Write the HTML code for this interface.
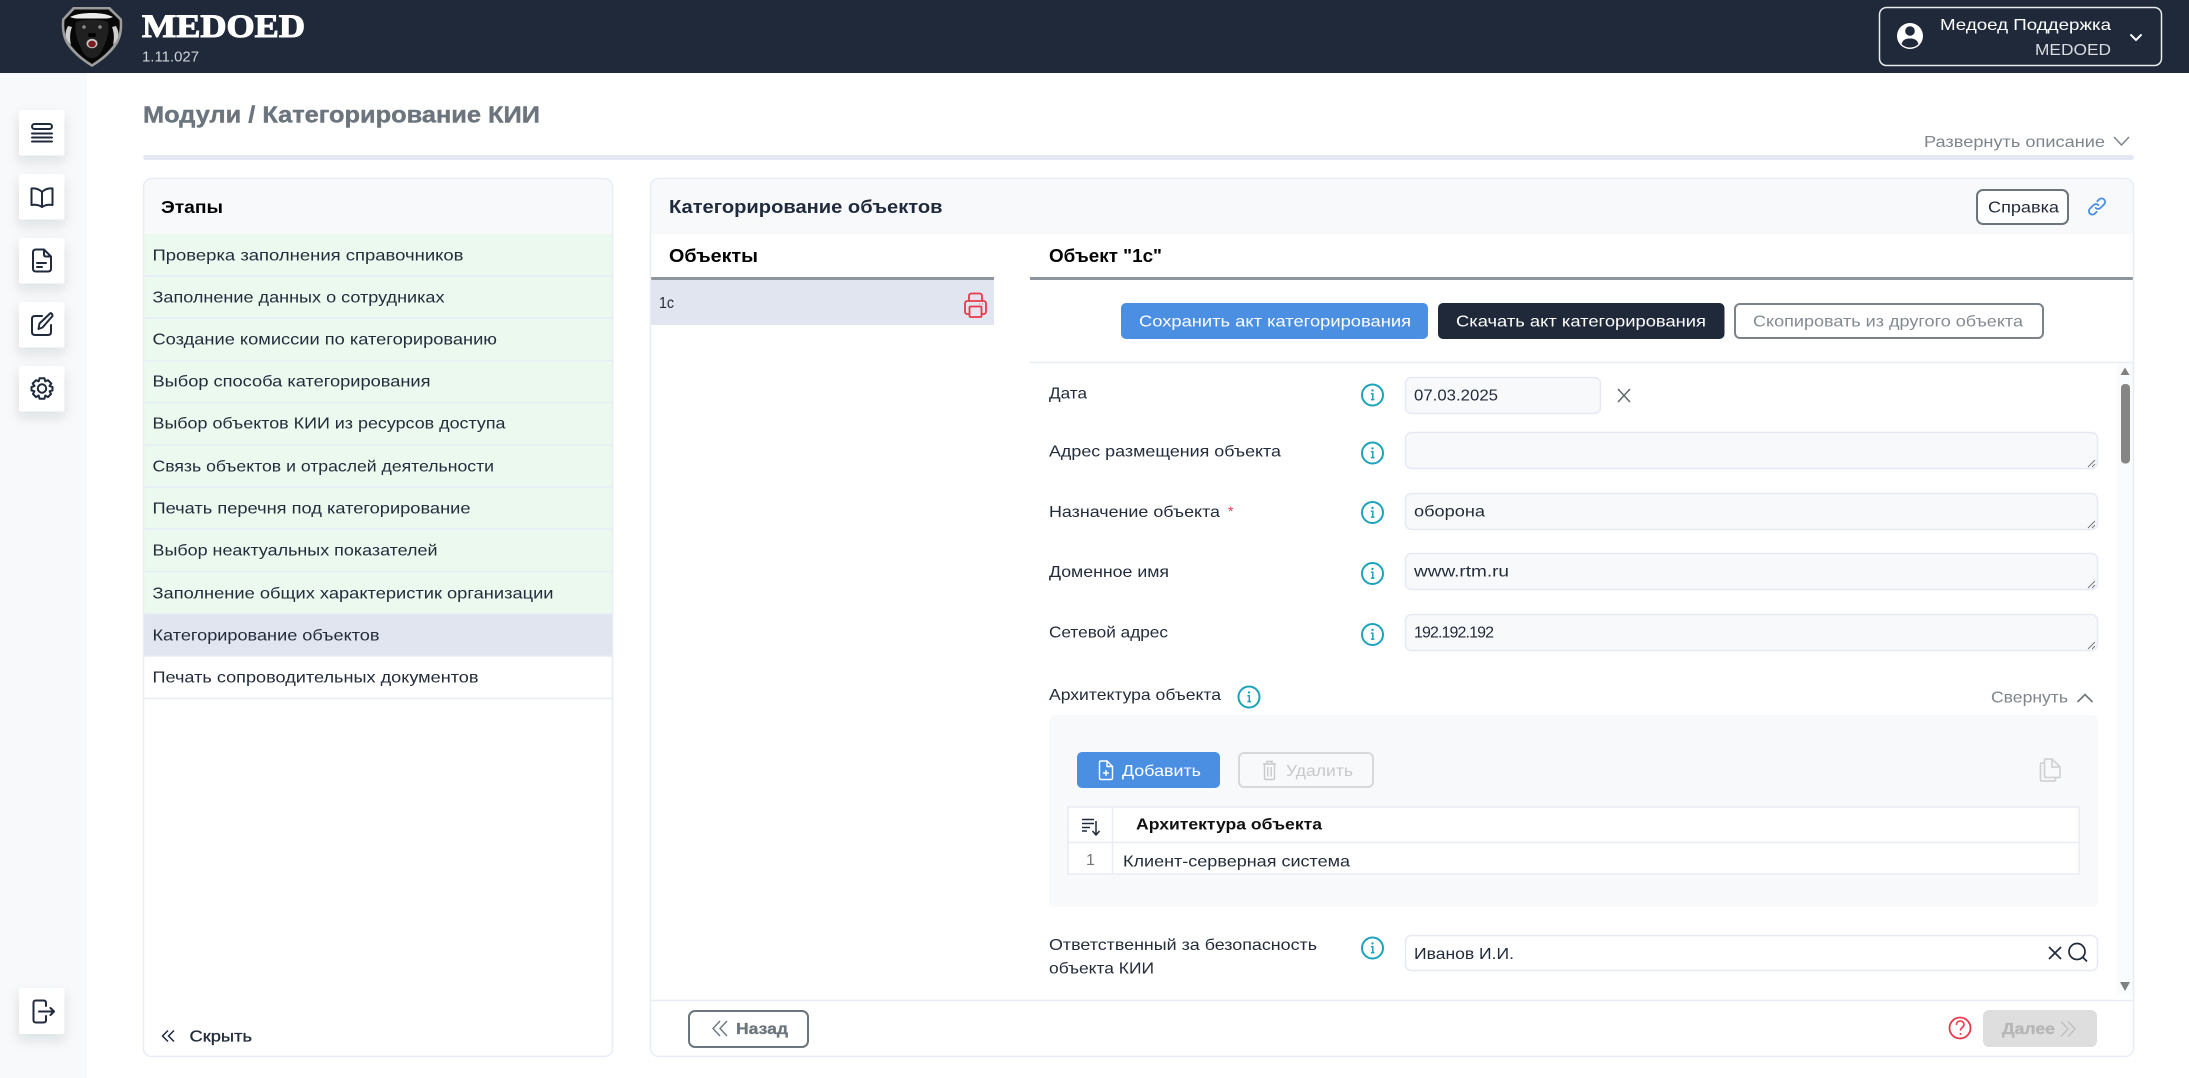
<!DOCTYPE html>
<html lang="ru">
<head>
<meta charset="utf-8">
<title>Модули / Категорирование КИИ</title>
<style>
html,body{margin:0;padding:0;background:#fff;width:2189px;height:1078px;overflow:hidden}
svg{display:block;position:absolute;left:0;top:0}
text{font-family:"Liberation Sans",sans-serif;font-size:16px;fill:#232c3b}
.b{font-weight:bold}
.ic{fill:none;stroke:#1f2a3d;stroke-width:2;stroke-linecap:round;stroke-linejoin:round}
.inf{fill:none;stroke:#1ba3bb;stroke-width:2}
.fld{fill:#f8f9fb;stroke:#e6e9f4;stroke-width:1.5}
.g{fill:#6c757d}
.ln{stroke:#e8ecf6;stroke-width:1.5;fill:none}
</style>
</head>
<body>
<svg width="2189" height="1078" viewBox="0 0 2189 1078" xmlns="http://www.w3.org/2000/svg">
<defs>
<filter id="sh" x="-50%" y="-50%" width="200%" height="200%"><feDropShadow dx="0" dy="6" stdDeviation="6" flood-color="#1f2a3d" flood-opacity="0.12"/></filter>
<g id="info"><circle cx="0" cy="0" r="10.5" class="inf"/><circle cx="0" cy="-4.6" r="1.2" fill="#1ba3bb"/><path d="M-1.6 -1.2H0.3V4.2M-1.6 4.6H2" fill="none" stroke="#1ba3bb" stroke-width="1.5"/></g>
<g id="grip"><path d="M-7 5L0 -2M-3 5L0 2" stroke="#777" stroke-width="1" fill="none"/></g>
</defs>

<!-- top bar -->
<rect x="0" y="0" width="2189" height="73" fill="#1f293a"/>
<!-- logo -->
<path d="M73 7H110L122 19C123 32 121 41 113 50C107 57 100 62 92 67C84 62 77 57 71 50C63 41 61 32 62 19Z" fill="#9c9c9c"/>
<path d="M74.500 9.500H108.500L119.500 20C120.500 32 118 40 111 48C105 55 99 59.500 92 64C85 59.500 79 55 73 48C66 40 63.500 32 64.500 20Z" fill="#070707"/>
<path d="M70 17C76 14 84 13 92 13C100 13 107 14 113 17C109 19 104 18.500 100 18.500H84C79 18.500 74 19 70 17Z" fill="#ececec"/>
<path d="M68 26C64 33 65 39 71 45C69.500 38 70 32 72 27Z" fill="#cfcfcf"/>
<path d="M116 26C120 33 119 39 113 45C114.500 38 114 32 112 27Z" fill="#cfcfcf"/>
<path d="M76 22C82 19 102 19 108 22C110 32 106 42 103 48C100 56 96 58 92 58C88 58 84 56 81 48C78 42 74 32 76 22Z" fill="#202020"/>
<circle cx="84" cy="27" r="1.800" fill="#8a8a8a"/><circle cx="100" cy="27" r="1.800" fill="#8a8a8a"/>
<rect x="88" y="33" width="8" height="4" rx="2" fill="#000"/>
<ellipse cx="92" cy="43.500" rx="5.500" ry="4.800" fill="#c9c0c0"/>
<ellipse cx="92" cy="44" rx="3.800" ry="3.200" fill="#7a1c20"/>

<text x="142" y="37" textLength="163" lengthAdjust="spacingAndGlyphs" style="font-family:'Liberation Serif',serif;font-weight:bold;font-size:33px;fill:#fff;stroke:#fff;stroke-width:1.100">MEDOED</text>
<text x="142" y="61.500" textLength="57" lengthAdjust="spacingAndGlyphs" style="font-size:14.500px;fill:#cfd3d9">1.11.027</text>

<rect x="1879.500" y="7.500" width="282" height="58" rx="7" fill="none" stroke="#e8eaee" stroke-width="1.500"/>
<circle cx="1910" cy="36" r="13" fill="#fff"/>
<circle cx="1910" cy="31" r="4.800" fill="#1f293a"/>
<path d="M1901.500 44C1903 39.500 1906 38.500 1910 38.500C1914 38.500 1917 39.500 1918.500 44C1916 46.500 1913 47.500 1910 47.500C1907 47.500 1904 46.500 1901.500 44Z" fill="#1f293a"/>
<text x="1940" y="30" textLength="171" lengthAdjust="spacingAndGlyphs" style="fill:#fff">Медоед Поддержка</text>
<text x="2035" y="55" textLength="76" lengthAdjust="spacingAndGlyphs" style="fill:#d8dbe0">MEDOED</text>
<path d="M2131 35L2136 40L2141 35" fill="none" stroke="#fff" stroke-width="2" stroke-linecap="round"/>

<!-- sidebar -->
<rect x="0" y="73" width="87" height="1005" fill="#f8f9fb"/>
<g fill="#fff" filter="url(#sh)">
<rect x="19" y="110" width="45.500" height="45.500" rx="2"/>
<rect x="19" y="174" width="45.500" height="45.500" rx="2"/>
<rect x="19" y="238" width="45.500" height="45.500" rx="2"/>
<rect x="19" y="302" width="45.500" height="45.500" rx="2"/>
<rect x="19" y="366" width="45.500" height="45.500" rx="2"/>
<rect x="19" y="988" width="45.500" height="46" rx="2"/>
</g>
<g class="ic">
<rect x="32" y="124" width="20" height="5" rx="2.500"/><path d="M32 133.500H52M32 137.500H52M32 141.500H52"/>
<path d="M42 192C39 189 35 188 31.500 188.500V205C35 204.500 39 205 42 207C45 205 49 204.500 52.500 205V188.500C49 188 45 189 42 192ZM42 192V207"/>
<path d="M44 249.500H36C34 249.500 33 250.500 33 252.500V268.500C33 270.500 34 271.500 36 271.500H48C50 271.500 51 270.500 51 268.500V256.500L44 249.500ZM44 249.500V254.500C44 255.800 44.800 256.500 46 256.500H51M37 263H46M37 267H42"/>
<path d="M42 316H35C33 316 32 317 32 319V332C32 334 33 335 35 335H48C50 335 51 334 51 332V325M38.500 329L39.500 323.500L50 313.500C51.200 312.500 52.800 314.500 52.500 316L42.500 327.500Z"/>
<g transform="translate(42 388.500)"><circle r="4.200"/><path d="M-2.400 -10.300H2.400L3.300 -7.200L6 -8.300L9.300 -5L7.500 -2.400L10.500 -1.500V2L7.600 2.700L9 5.500L6 8.600L3.300 7L2.400 10.300H-2.400L-3.300 7L-6 8.600L-9 5.500L-7.600 2.700L-10.500 2V-1.500L-7.500 -2.400L-9.300 -5L-6 -8.300L-3.300 -7.200Z"/></g>
<path d="M46 1006V1003C46 1001 45 1000.500 43.500 1000.500H36C34 1000.500 33.500 1001 33.500 1003V1020C33.500 1022 34 1022.500 36 1022.500H43.500C45 1022.500 46 1022 46 1020V1016M39 1011.500H53.500M50.500 1008L54 1011.500L50.500 1015"/>
</g>

<!-- title -->
<text x="143" y="122.500" textLength="397" lengthAdjust="spacingAndGlyphs" class="b" style="font-size:23px;fill:#6c757d;stroke:#6c757d;stroke-width:.4">Модули / Категорирование КИИ</text>
<text x="1924" y="147" textLength="181" lengthAdjust="spacingAndGlyphs" style="fill:#7d858d">Развернуть описание</text>
<path d="M2114 137L2121.500 145L2129 137" fill="none" stroke="#7d858d" stroke-width="1.500"/>
<rect x="143" y="155" width="1991" height="5" rx="2.500" fill="#e3e8f3"/>

<!-- left panel -->
<rect x="143.500" y="178.500" width="469" height="878" rx="8" fill="#fff"/>
<path d="M143.500 234V186.500A8 8 0 0 1 151.500 178.500H604.500A8 8 0 0 1 612.500 186.500V234Z" fill="#f8f9fb"/>
<text x="161" y="213" textLength="62" lengthAdjust="spacingAndGlyphs" class="b" style="font-size:17.500px;fill:#000">Этапы</text>
<rect x="144" y="234" width="468" height="380" fill="#ebf9ef"/>
<rect x="144" y="614" width="468" height="42" fill="#e1e5f0"/>
<path class="ln" d="M144 276H612M144 318H612M144 360.500H612M144 402.500H612M144 445H612M144 487H612M144 529H612M144 571.500H612M144 614H612M144 656H612M144 698.500H612"/>
<g>
<text x="152.500" y="260.500" textLength="311" lengthAdjust="spacingAndGlyphs">Проверка заполнения справочников</text>
<text x="152.500" y="302.500" textLength="292" lengthAdjust="spacingAndGlyphs">Заполнение данных о сотрудниках</text>
<text x="152.500" y="344.500" textLength="344.500" lengthAdjust="spacingAndGlyphs">Создание комиссии по категорированию</text>
<text x="152.500" y="386.500" textLength="278" lengthAdjust="spacingAndGlyphs">Выбор способа категорирования</text>
<text x="152.500" y="428.500" textLength="353" lengthAdjust="spacingAndGlyphs">Выбор объектов КИИ из ресурсов доступа</text>
<text x="152.500" y="471.500" textLength="341.500" lengthAdjust="spacingAndGlyphs">Связь объектов и отраслей деятельности</text>
<text x="152.500" y="513.500" textLength="318" lengthAdjust="spacingAndGlyphs">Печать перечня под категорирование</text>
<text x="152.500" y="555.500" textLength="285" lengthAdjust="spacingAndGlyphs">Выбор неактуальных показателей</text>
<text x="152.500" y="598.500" textLength="401" lengthAdjust="spacingAndGlyphs">Заполнение общих характеристик организации</text>
<text x="152.500" y="640.500" textLength="227" lengthAdjust="spacingAndGlyphs">Категорирование объектов</text>
<text x="152.500" y="682.500" textLength="326" lengthAdjust="spacingAndGlyphs">Печать сопроводительных документов</text>
</g>
<rect x="143.500" y="178.500" width="469" height="878" rx="8" class="ln"/>
<path d="M168 1030.500L162.500 1036L168 1041.500M174 1030.500L168.500 1036L174 1041.500" fill="none" stroke="#1f2a3d" stroke-width="1.500"/>
<text x="189.500" y="1041.500" textLength="62.500" lengthAdjust="spacingAndGlyphs" style="stroke:#232c3b;stroke-width:.3">Скрыть</text>

<!-- right panel -->
<path d="M650.500 234V186.500A8 8 0 0 1 658.500 178.500H2125.500A8 8 0 0 1 2133.500 186.500V234Z" fill="#f8f9fb"/>
<text x="669" y="213" textLength="273.500" lengthAdjust="spacingAndGlyphs" class="b" style="font-size:18px;fill:#1f2a3d">Категорирование объектов</text>
<rect x="1977" y="190" width="91" height="34" rx="6" fill="#fff" stroke="#6c757d" stroke-width="2"/>
<text x="1988" y="212.500" textLength="71" lengthAdjust="spacingAndGlyphs">Справка</text>
<g transform="translate(2097 206.500) rotate(-45)" fill="none" stroke="#4b8fe3" stroke-width="1.800" stroke-linecap="round"><path d="M2 0A3.500 3.500 0 0 0 -1.500 -3.500H-6.500A3.500 3.500 0 0 0 -6.500 3.500H-4"/><path d="M-2 0A3.500 3.500 0 0 0 1.500 3.500H6.500A3.500 3.500 0 0 0 6.500 -3.500H4"/></g>

<text x="669" y="262" textLength="89" lengthAdjust="spacingAndGlyphs" class="b" style="font-size:18px;fill:#000">Объекты</text>
<rect x="651" y="277" width="343" height="3" fill="#8f959c"/>
<rect x="651" y="280" width="343" height="45" fill="#e1e5f0"/>
<text x="659" y="308" textLength="15" lengthAdjust="spacingAndGlyphs">1с</text>
<g fill="none" stroke="#e8394a" stroke-width="1.800" stroke-linejoin="round">
<path d="M969 301V296C969 294.500 970 293.500 971.500 293.500H979.500C981 293.500 982 294.500 982 296V301"/>
<path d="M969.500 314H967.500C966 314 965 313 965 311.500V303.500C965 302 966 301 967.500 301H983.500C985 301 986 302 986 303.500V311.500C986 313 985 314 983.500 314H981.500"/>
<rect x="969.500" y="306.500" width="12" height="10.500" rx="1"/>
<path d="M979.500 304H980M982.500 304H983"/>
</g>

<text x="1049" y="262" textLength="113" lengthAdjust="spacingAndGlyphs" class="b" style="font-size:18px;fill:#000">Объект "1с"</text>
<rect x="1030" y="277" width="1103" height="3" fill="#8f959c"/>

<rect x="1121" y="303" width="307" height="36" rx="5" fill="#4b8fe3"/>
<text x="1139" y="326.500" textLength="272" lengthAdjust="spacingAndGlyphs" style="fill:#fff">Сохранить акт категорирования</text>
<rect x="1438" y="303" width="286.500" height="36" rx="5" fill="#1f293a"/>
<text x="1456" y="326.500" textLength="250" lengthAdjust="spacingAndGlyphs" style="fill:#fff">Скачать акт категорирования</text>
<rect x="1735" y="304" width="308" height="34" rx="5" fill="#fff" stroke="#7a828a" stroke-width="2"/>
<text x="1753" y="326.500" textLength="270" lengthAdjust="spacingAndGlyphs" style="fill:#838a92">Скопировать из другого объекта</text>
<path class="ln" d="M1030 362.500H2133"/>

<!-- scrollbar -->
<rect x="2117" y="363" width="16" height="632" fill="#fafbfc"/>
<path d="M2125 367.500L2129.500 375H2120.500Z" fill="#808080"/>
<rect x="2121" y="384" width="9" height="79.500" rx="4" fill="#858585"/>
<path d="M2125 991L2130 982H2120Z" fill="#808080"/>

<!-- form -->
<text x="1049" y="398.500" textLength="38" lengthAdjust="spacingAndGlyphs">Дата</text>
<text x="1049" y="456.500" textLength="232" lengthAdjust="spacingAndGlyphs">Адрес размещения объекта</text>
<text x="1049" y="517" textLength="171" lengthAdjust="spacingAndGlyphs">Назначение объекта</text>
<text x="1228" y="516" style="fill:#e8394a;font-size:14px">*</text>
<text x="1049" y="577" textLength="120" lengthAdjust="spacingAndGlyphs">Доменное имя</text>
<text x="1049" y="637.500" textLength="119" lengthAdjust="spacingAndGlyphs">Сетевой адрес</text>

<use href="#info" x="1372.500" y="395"/>
<use href="#info" x="1372.500" y="453"/>
<use href="#info" x="1372.500" y="512.500"/>
<use href="#info" x="1372.500" y="573.500"/>
<use href="#info" x="1372.500" y="634.500"/>

<rect class="fld" x="1405.500" y="377.500" width="195" height="36" rx="6"/>
<text x="1414" y="400.500" textLength="84" lengthAdjust="spacingAndGlyphs">07.03.2025</text>
<path d="M1618 389L1630 402M1630 389L1618 402" stroke="#5f6670" stroke-width="1.500" fill="none"/>
<rect class="fld" x="1405.500" y="432.500" width="692" height="36" rx="6"/>
<rect class="fld" x="1405.500" y="493.500" width="692" height="36" rx="6"/>
<text x="1414" y="516.500" textLength="71" lengthAdjust="spacingAndGlyphs">оборона</text>
<rect class="fld" x="1405.500" y="553.500" width="692" height="36" rx="6"/>
<text x="1414" y="576.500" textLength="95" lengthAdjust="spacingAndGlyphs">www.rtm.ru</text>
<rect class="fld" x="1405.500" y="614.500" width="692" height="36" rx="6"/>
<text x="1414" y="637.500" textLength="80" lengthAdjust="spacing">192.192.192</text>
<use href="#grip" x="2095" y="462"/>
<use href="#grip" x="2095" y="523"/>
<use href="#grip" x="2095" y="583"/>
<use href="#grip" x="2095" y="644"/>

<!-- architecture -->
<text x="1049" y="700" textLength="172" lengthAdjust="spacingAndGlyphs">Архитектура объекта</text>
<use href="#info" x="1249" y="697"/>
<text x="1991" y="702.500" textLength="77" lengthAdjust="spacingAndGlyphs" style="fill:#7d858d">Свернуть</text>
<path d="M2077.500 702L2085 694.500L2092.500 702" fill="none" stroke="#6c757d" stroke-width="1.600"/>
<rect x="1049" y="715" width="1049" height="192" rx="6" fill="#f8f9fb"/>

<rect x="1077" y="752" width="143" height="36" rx="5" fill="#4b8fe3"/>
<path d="M1107 761H1101C1100 761 1099.500 761.500 1099.500 762.500V778C1099.500 779 1100 779.500 1101 779.500H1111C1112 779.500 1112.500 779 1112.500 778V766.500ZM1107 761V766.500H1112.500M1106 770V776M1103 773H1109" fill="none" stroke="#fff" stroke-width="1.400"/>
<text x="1122" y="776" textLength="79" lengthAdjust="spacingAndGlyphs" style="fill:#fff">Добавить</text>
<rect x="1239" y="753" width="134" height="34" rx="5" fill="none" stroke="#d8d8d8" stroke-width="2"/>
<path d="M1263 764H1276M1267 764V761.500H1272V764M1264.500 764V778C1264.500 779 1265 779.500 1266 779.500H1273C1274 779.500 1274.500 779 1274.500 778V764M1267.800 767V776.500M1271.200 767V776.500" fill="none" stroke="#c9c9c9" stroke-width="1.400"/>
<text x="1286" y="776" textLength="67" lengthAdjust="spacingAndGlyphs" style="fill:#c8c8c8">Удалить</text>
<path d="M2044 763H2041.500C2041 763 2040.500 763.500 2040.500 764V780C2040.500 780.800 2041 781 2041.500 781H2054C2054.800 781 2055.500 780.500 2055.500 779.500V777M2052 759H2045.500C2044.800 759 2044.500 759.500 2044.500 760V776.500C2044.500 777 2044.800 777.500 2045.500 777.500H2059C2059.800 777.500 2060 777 2060 776.500V767ZM2052 759V767H2060" fill="none" stroke="#d2d2d2" stroke-width="1.700"/>

<rect x="1068" y="807" width="1011" height="67" fill="#fff" stroke="#e8ecf6" stroke-width="1.500"/>
<path class="ln" d="M1068 842.500H2079M1112.500 807V874"/>
<path d="M1082 819.500H1094M1082 823.500H1094M1082 827.500H1090M1082 831H1087M1096 821V834.500M1092.500 831L1096 835L1099.500 831" fill="none" stroke="#1f2a3d" stroke-width="1.500"/>
<text x="1136" y="829.500" textLength="186" lengthAdjust="spacingAndGlyphs" class="b" style="fill:#111">Архитектура объекта</text>
<text x="1086" y="865" style="fill:#777">1</text>
<text x="1123" y="866.500" textLength="227" lengthAdjust="spacingAndGlyphs">Клиент-серверная система</text>

<text x="1049" y="950" textLength="268" lengthAdjust="spacingAndGlyphs">Ответственный за безопасность</text>
<text x="1049" y="973.500" textLength="105" lengthAdjust="spacingAndGlyphs">объекта КИИ</text>
<use href="#info" x="1372.500" y="948"/>
<rect x="1405.500" y="935.500" width="692" height="35" rx="6" fill="#fff" stroke="#e6e9f4" stroke-width="1.500"/>
<text x="1414" y="959" textLength="100" lengthAdjust="spacingAndGlyphs">Иванов И.И.</text>
<path d="M2049 947L2061 959M2061 947L2049 959" stroke="#1f2a3d" stroke-width="1.700" fill="none"/>
<circle cx="2077" cy="951.500" r="8" fill="none" stroke="#1f2a3d" stroke-width="1.700"/>
<path d="M2083 957.500L2087 961.500" stroke="#1f2a3d" stroke-width="1.700" fill="none"/>

<!-- panel outline & footer -->
<rect x="650.500" y="178.500" width="1483" height="878" rx="8" class="ln"/>
<path class="ln" d="M651 1000.500H2133"/>
<rect x="689" y="1011" width="119" height="36" rx="6" fill="#fff" stroke="#6c757d" stroke-width="2"/>
<path d="M720 1021L713 1028.500L720 1036M727 1021L720 1028.500L727 1036" fill="none" stroke="#6c757d" stroke-width="1.400"/>
<text x="736" y="1034" textLength="52" lengthAdjust="spacingAndGlyphs" class="b g" style="fill:#6c757d;stroke:#6c757d;stroke-width:.3">Назад</text>
<circle cx="1960" cy="1028" r="10.500" fill="none" stroke="#e8394a" stroke-width="1.800"/>
<path d="M1956.500 1025C1956.500 1019.500 1964 1020 1964 1024.500C1964 1027.500 1960.500 1027.500 1960.500 1030.500" fill="none" stroke="#e8394a" stroke-width="1.600"/>
<circle cx="1960.500" cy="1034" r="1" fill="#e8394a"/>
<rect x="1983" y="1010" width="114" height="37" rx="6" fill="#dedede"/>
<text x="2002" y="1034" textLength="53" lengthAdjust="spacingAndGlyphs" class="b" style="fill:#b6b6b6;stroke:#b6b6b6;stroke-width:.3">Далее</text>
<path d="M2061 1021.500L2068 1029L2061 1036.500M2068 1021.500L2075 1029L2068 1036.500" fill="none" stroke="#c0c0c0" stroke-width="1.400"/>
</svg>
</body>
</html>
